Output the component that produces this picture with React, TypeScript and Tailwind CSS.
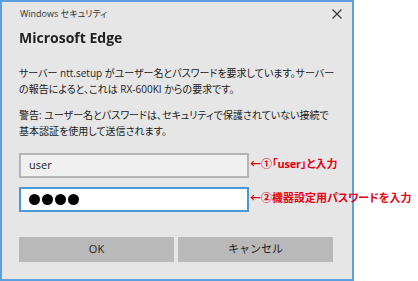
const jp = "font-['Open_Sans','Noto_Sans_CJK_JP',sans-serif]";

function Annotation({ top, children }: { top: string; children: React.ReactNode }) {
  return (
    <div
      className={`absolute left-[250px] ${top} text-[11px] font-bold leading-none text-[#e60012] whitespace-nowrap font-['Noto_Sans_CJK_JP',sans-serif] [font-feature-settings:'palt']`}
    >
      {children}
    </div>
  );
}

export default function App() {
  return (
    <div className={`relative w-[418px] h-[281px] bg-white overflow-hidden ${jp}`}>
      <div className="w-[354px] h-[281px] bg-[#e6e6e6] border-2 border-[#5aa0e0] flex flex-col text-[#1a1a1a]">
        <div className="flex items-center justify-between h-[24px] pl-[18px] pr-[9px]">
          <span className="text-[9px] text-[#333] [font-feature-settings:'palt']">Windows セキュリティ</span>
          <svg width="12" height="12" viewBox="0 0 12 12" className="text-[#333]">
            <path d="M1.5 1.5 L10.5 10.5 M10.5 1.5 L1.5 10.5" stroke="currentColor" strokeWidth="1.1" fill="none" />
          </svg>
        </div>
        <div className="pl-[17px] mt-[1px] h-[22px] text-[14px] font-bold leading-[22px] text-[#222] blur-[0.4px]">
          Microsoft Edge
        </div>
        <div className="pl-[17px] mt-[16px] text-[10px] leading-[16px] whitespace-nowrap [font-feature-settings:'palt']">
          <p>サーバー ntt.setup がユーザー名とパスワードを要求しています。サーバー</p>
          <p>の報告によると、これは RX-600KI からの要求です。</p>
          <p className="mt-[10px]">警告: ユーザー名とパスワードは、セキュリティで保護されていない接続で</p>
          <p>基本認証を使用して送信されます。</p>
        </div>
        <div className="pl-[17px] mt-[14px] flex flex-col gap-[9px]">
          <div className="w-[230px] h-[25px] bg-[#f0f0f0] border-2 border-[#b4b4b4] flex items-center pl-[8px] text-[11px] text-[#222]">
            user
          </div>
          <div className="w-[230px] h-[25px] bg-white border-2 border-[#4b98d8] flex items-center pl-[8px] gap-[2px]">
            {[0, 1, 2, 3].map((i) => (
              <span key={i} className="w-[11px] h-[11px] rounded-full bg-black" />
            ))}
          </div>
        </div>
        <div className="pl-[17px] mt-[25px] flex gap-[4px] text-[11px] text-[#222]">
          <div className="w-[155px] h-[25px] bg-[#b9b9b9] flex items-center justify-center">OK</div>
          <div className="w-[155px] h-[25px] bg-[#b9b9b9] flex items-center justify-center">キャンセル</div>
        </div>
      </div>
      <Annotation top="top-[158px]">
        ←①「<span className="font-['Open_Sans',sans-serif] tracking-[-0.2px]">user</span>」と入力
      </Annotation>
      <Annotation top="top-[192px]">←②機器設定用パスワードを入力</Annotation>
    </div>
  );
}
